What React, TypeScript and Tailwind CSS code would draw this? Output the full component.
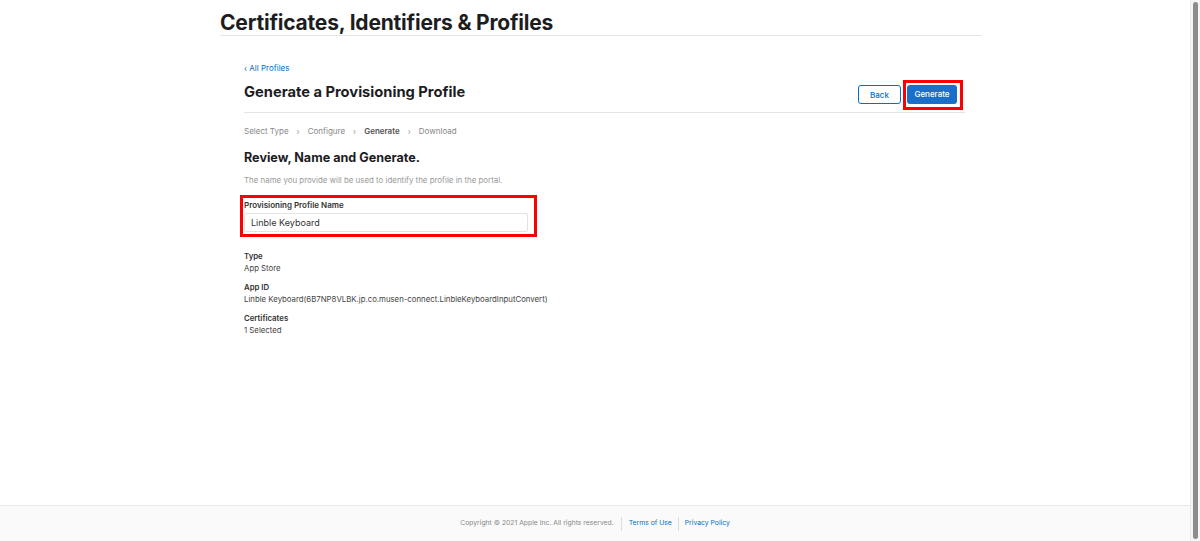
import React from "react";

export default function App() {
  const font = { fontFamily: "Inter, 'Liberation Sans', sans-serif" };
  return (
    <div className="flex h-[541px] w-[1200px] bg-white overflow-hidden" style={font}>
      <div className="flex flex-1 flex-col">
        <main className="flex-1">
          <div className="ml-[220px] w-[762px]">
            <div className="h-[36px] border-b border-[#e5e5e5] pt-[10px]">
              <h1 className="text-[21px] font-bold leading-[25px] tracking-[-0.2px] text-[#1d1d1f]">
                Certificates, Identifiers &amp; Profiles
              </h1>
            </div>
            <section className="ml-[24px] w-[721px]">
              <div className="mt-[26px] text-[8px] leading-[12px] text-[#0070c9]">‹ All Profiles</div>
              <div className="mt-[6px] flex h-[33px] items-center justify-between border-b border-[#e5e5e5] pb-[3px]">
                <h2 className="pb-[5px] text-[14.7px] font-bold leading-[20px] text-[#1d1d1f]">
                  Generate a Provisioning Profile
                </h2>
                <div className="mr-[2px] flex items-center gap-[2px]">
                  <button className="flex h-[19px] w-[43px] items-center justify-center rounded-[3px] border border-[#0070c9] bg-white text-[8px] font-medium text-[#0070c9]">
                    Back
                  </button>
                  <div className="flex h-[30px] items-start border-[3px] border-[#ff0000] pl-[1px] pr-[3px] pt-[2px]">
                    <button className="flex h-[19px] w-[50px] items-center justify-center rounded-[3px] bg-[#1a6fc9] text-[8px] font-medium text-white">
                      Generate
                    </button>
                  </div>
                </div>
              </div>
              <div className="mt-[12px] flex items-center text-[8px] leading-[12px] text-[#888888]">
                <span>Select Type</span>
                <span className="mx-[8px] text-[#999]">›</span>
                <span>Configure</span>
                <span className="mx-[8px] text-[#999]">›</span>
                <span className="font-semibold text-[#555555]">Generate</span>
                <span className="mx-[8px] text-[#999]">›</span>
                <span>Download</span>
              </div>
              <h3 className="mt-[12px] text-[12.6px] font-bold leading-[18px] text-[#1d1d1f]">
                Review, Name and Generate.
              </h3>
              <p className="mt-[7px] text-[7.9px] leading-[12px] text-[#999999]">
                The name you provide will be used to identify the profile in the portal.
              </p>
              <div className="-ml-[4px] mt-[9px] h-[42px] w-[297px] border-[3px] border-[#ff0000] pl-[1px] pr-[6px] pt-[1px]">
                <div className="text-[8px] font-semibold leading-[12px] text-[#333333]">Provisioning Profile Name</div>
                <div className="mt-[2px] flex h-[19px] items-center rounded-[2px] border border-[#e3e3e3] px-[6px] text-[9px] text-[#333333]">
                  Linble Keyboard
                </div>
              </div>
              <div className="mt-[14px] flex flex-col gap-[8px] text-[7.8px] text-[#333333]">
                <div>
                  <div className="font-semibold leading-[11px]">Type</div>
                  <div className="leading-[12px] text-[#444]">App Store</div>
                </div>
                <div>
                  <div className="font-semibold leading-[11px]">App ID</div>
                  <div className="leading-[12px] text-[#444]">
                    Linble Keyboard(6B7NP8VLBK.jp.co.musen-connect.LinbleKeyboardInputConvert)
                  </div>
                </div>
                <div>
                  <div className="font-semibold leading-[11px]">Certificates</div>
                  <div className="leading-[12px] text-[#444]">1 Selected</div>
                </div>
              </div>
            </section>
          </div>
        </main>
        <footer className="flex h-[36px] items-center justify-center border-t border-[#e8e8e8] bg-[#fafafa] text-[6.8px] text-[#888888]">
          <span>Copyright © 2021 Apple Inc. All rights reserved.</span>
          <span className="mx-[7px] h-[14px] w-px bg-[#dddddd]" />
          <span className="text-[#0070c9]">Terms of Use</span>
          <span className="mx-[6px] h-[14px] w-px bg-[#dddddd]" />
          <span className="text-[#0070c9]">Privacy Policy</span>
        </footer>
      </div>
      <div className="flex w-[10px] justify-center border-l border-[#ebebeb] bg-[#f5f5f5] py-[2px]">
        <div className="w-[5px] rounded-full bg-[#8c8c8c]" />
      </div>
    </div>
  );
}
